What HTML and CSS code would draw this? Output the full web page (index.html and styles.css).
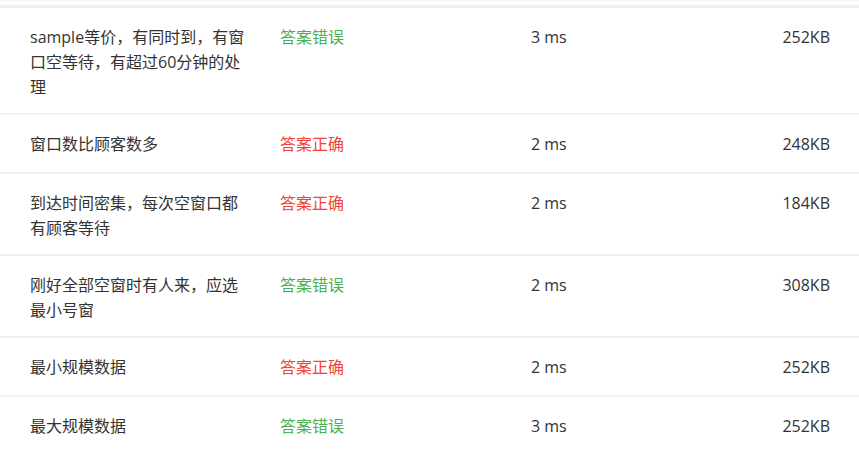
FILE: index.html
```html
<!DOCTYPE html>
<html lang="zh">
<head>
<meta charset="utf-8">
<link rel="stylesheet" href="styles.css">
</head>
<body>
<div class="top"></div>
<div class="list">
  <div class="row">
    <div class="name">sample等价，有同时到，有窗口空等待，有超过60分钟的处理</div>
    <div class="res wrong">答案错误</div>
    <div class="time">3 ms</div>
    <div class="mem">252KB</div>
  </div>
  <div class="row">
    <div class="name">窗口数比顾客数多</div>
    <div class="res right">答案正确</div>
    <div class="time">2 ms</div>
    <div class="mem">248KB</div>
  </div>
  <div class="row">
    <div class="name">到达时间密集，每次空窗口都有顾客等待</div>
    <div class="res right">答案正确</div>
    <div class="time">2 ms</div>
    <div class="mem">184KB</div>
  </div>
  <div class="row">
    <div class="name">刚好全部空窗时有人来，应选最小号窗</div>
    <div class="res wrong">答案错误</div>
    <div class="time">2 ms</div>
    <div class="mem">308KB</div>
  </div>
  <div class="row">
    <div class="name">最小规模数据</div>
    <div class="res right">答案正确</div>
    <div class="time">2 ms</div>
    <div class="mem">252KB</div>
  </div>
  <div class="row">
    <div class="name">最大规模数据</div>
    <div class="res wrong">答案错误</div>
    <div class="time">3 ms</div>
    <div class="mem">252KB</div>
  </div>
</div>
</body>
</html>
```
FILE: styles.css
```css
html, body {
  margin: 0;
  padding: 0;
  background: #fff;
}
body {
  font-family: "Open Sans", "Noto Sans CJK SC", sans-serif;
  font-size: 16px;
  line-height: 25px;
  color: #333;
}
.top {
  box-sizing: border-box;
  height: 8px;
  border-top: 1px solid #f7f7f7;
  border-bottom: 3px solid #efefef;
}
.row {
  display: grid;
  grid-template-columns: 220px 251px 1fr auto;
  column-gap: 30px;
  min-height: 27px;
  padding: 17px 29px 13px 30px;
  border-bottom: 2px solid #f1f1f1;
}
.row:last-child {
  border-bottom: none;
}
.name {
  word-break: break-all;
}
.res {
  white-space: nowrap;
}
.time {
  margin-left: -30px;
}
.wrong { color: #4caf50; }
.right { color: #f44336; }
.mem {
  text-align: right;
}
```
